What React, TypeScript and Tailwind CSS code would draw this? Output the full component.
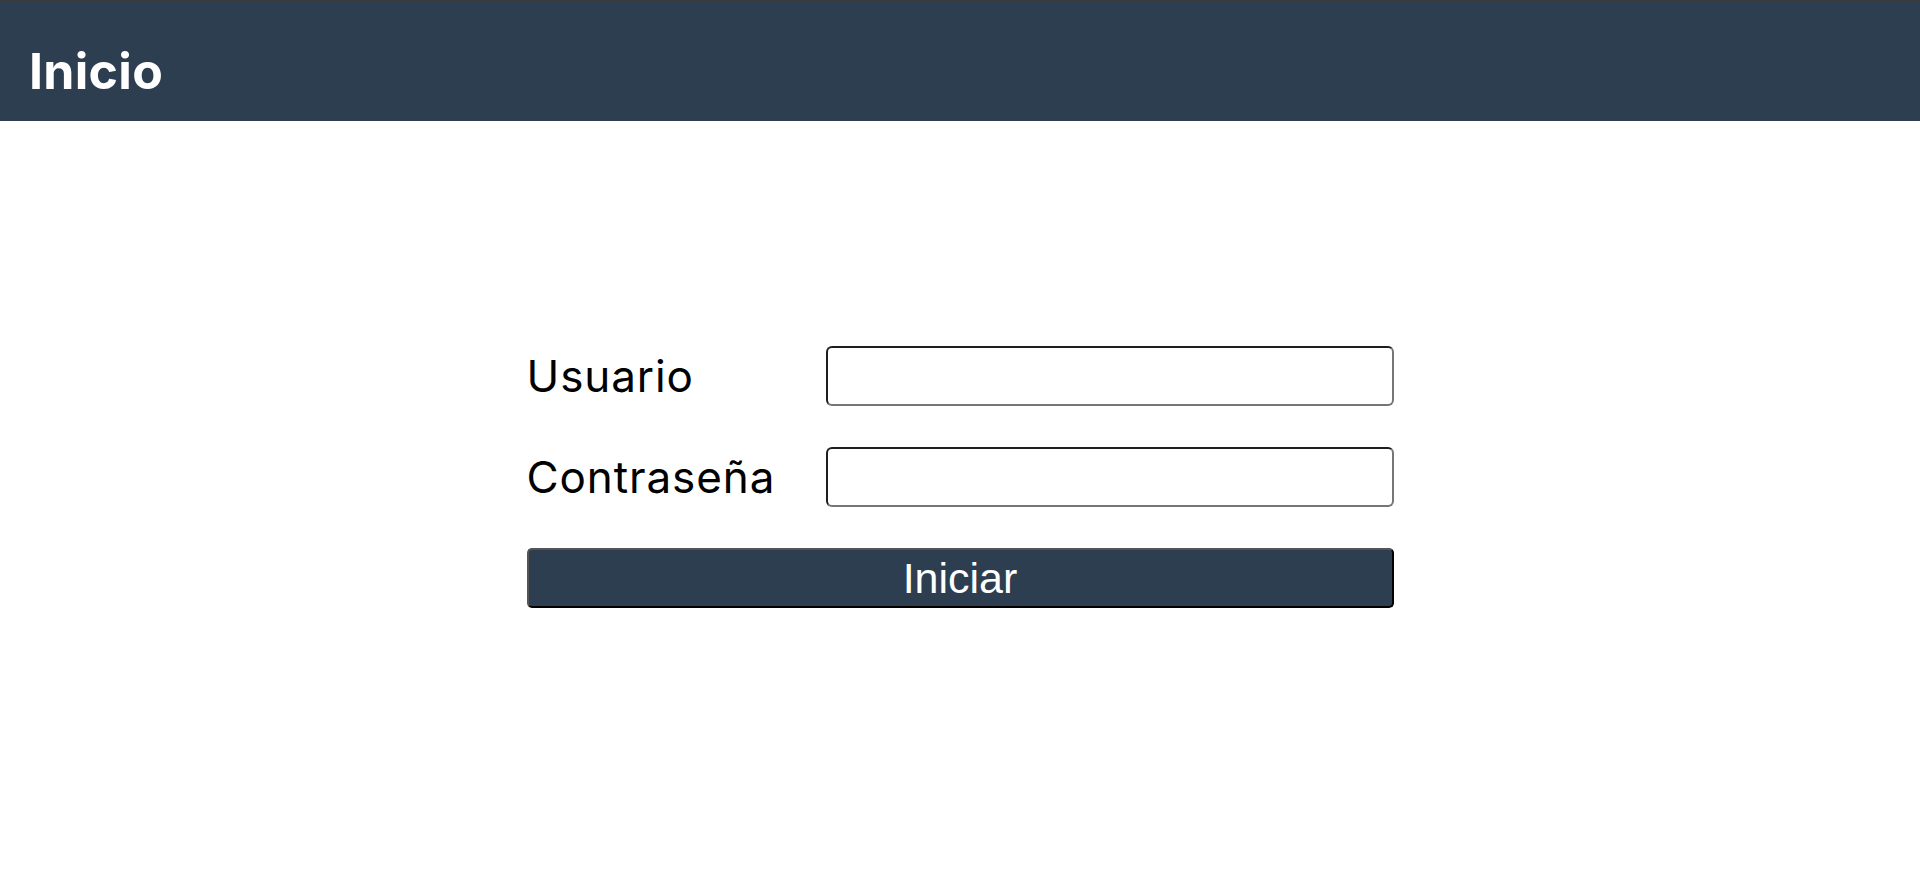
import React, { useState } from "react";

export default function App() {
  const [user, setUser] = useState<string>("");
  const [password, setPassword] = useState<string>("");

  return (
    <div className="min-h-screen bg-white">
      <header className="h-[121px] border-t border-[#3a3a3a] bg-[#2d3e50] pl-[29px] pt-[45px]">
        <h1 className="font-['Inter',sans-serif] text-[50px] font-bold leading-[50px] tracking-[0.3px] text-white">
          Inicio
        </h1>
      </header>

      <form
        className="mx-auto mt-[225px] grid w-[867px] grid-cols-[299px_568px] items-center gap-y-[41px]"
        onSubmit={(e) => e.preventDefault()}
      >
        <label
          htmlFor="usuario"
          className="font-['Inter',sans-serif] text-[44px] leading-none tracking-[0.9px] text-black"
        >
          Usuario
        </label>
        <input
          id="usuario"
          type="text"
          className="h-[60px] w-full rounded-[6px] border-2 border-t-[#1e1e1e] border-l-[#1e1e1e] border-b-[#767676] border-r-[#767676] bg-white px-2 outline-none"
          value={user}
          onChange={(e) => setUser(e.target.value)}
        />

        <label
          htmlFor="password"
          className="font-['Inter',sans-serif] text-[44px] leading-none tracking-[0.9px] text-black"
        >
          Contraseña
        </label>
        <input
          id="password"
          type="password"
          className="h-[60px] w-full rounded-[6px] border-2 border-t-[#1e1e1e] border-l-[#1e1e1e] border-b-[#767676] border-r-[#767676] bg-white px-2 outline-none"
          value={password}
          onChange={(e) => setPassword(e.target.value)}
        />

        <button
          type="submit"
          className="col-span-2 h-[60px] rounded-[5px] border-2 border-t-[#555555] border-l-[#555555] border-b-black border-r-black bg-[#2d3e50] font-['Liberation_Sans',Arial,sans-serif] text-[43px] leading-none text-white"
        >
          Iniciar
        </button>
      </form>
    </div>
  );
}
